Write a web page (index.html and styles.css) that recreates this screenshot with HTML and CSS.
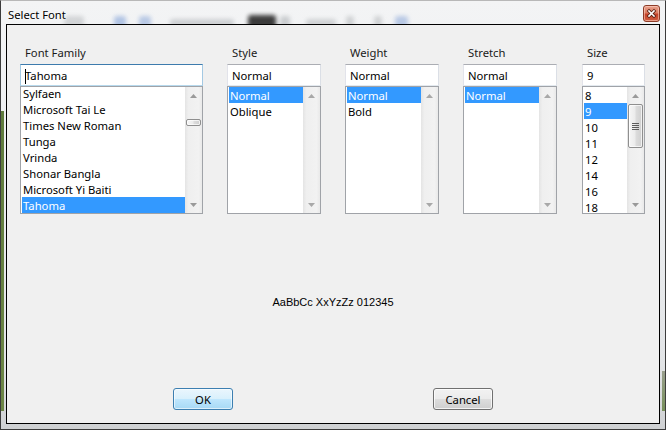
FILE: index.html
```html
<!DOCTYPE html>
<html>
<head>
<meta charset="utf-8">
<title>Select Font</title>
<link rel="stylesheet" href="styles.css">
</head>
<body>
<div class="window">
  <div class="titlebar">
    <div class="glass" aria-hidden="true">
      <span class="blob b1"></span>
      <span class="blob b2"></span>
      <span class="blob b3"></span>
      <span class="blob b4"></span>
      <span class="blob b5"></span>
      <span class="blob b6"></span>
      <span class="blob b7"></span>
      <span class="blob b8"></span>
      <span class="blob b9"></span>
      <span class="blob b10"></span>
    </div>
    <span class="title">Select Font</span>
    <div class="close" role="button" aria-label="Close">
      <svg width="15" height="15" viewBox="0 0 15 15">
        <path d="M5 5 L10 10 M10 5 L5 10" stroke="#5a2214" stroke-width="3.2" stroke-linecap="square" fill="none"/>
        <path d="M5 5 L10 10 M10 5 L5 10" stroke="#ffffff" stroke-width="1.6" stroke-linecap="square" fill="none"/>
      </svg>
    </div>
  </div>

  <div class="client">
    <div class="pickers">
      <div class="field">
        <div class="label">Font Family</div>
        <div class="input focus"><span class="caret"></span>Tahoma</div>
        <div class="list">
          <ul class="items shift">
            <li>Sylfaen</li>
            <li>Microsoft Tai Le</li>
            <li>Times New Roman</li>
            <li>Tunga</li>
            <li>Vrinda</li>
            <li>Shonar Bangla</li>
            <li>Microsoft Yi Baiti</li>
            <li class="sel">Tahoma</li>
          </ul>
          <div class="scrollbar">
            <div class="arrow"><svg width="7" height="4" viewBox="0 0 7 4"><polygon points="0,4 3.5,0 7,4" fill="#9a9a9a"/></svg></div>
            <div class="track"><div class="thumb small"></div></div>
            <div class="arrow"><svg width="7" height="4" viewBox="0 0 7 4"><polygon points="0,0 7,0 3.5,4" fill="#9a9a9a"/></svg></div>
          </div>
        </div>
      </div>

      <div class="field">
        <div class="label">Style</div>
        <div class="input">Normal</div>
        <div class="list">
          <ul class="items">
            <li class="sel">Normal</li>
            <li>Oblique</li>
          </ul>
          <div class="scrollbar">
            <div class="arrow"><svg width="7" height="4" viewBox="0 0 7 4"><polygon points="0,4 3.5,0 7,4" fill="#a8a8a8"/></svg></div>
            <div class="track"></div>
            <div class="arrow"><svg width="7" height="4" viewBox="0 0 7 4"><polygon points="0,0 7,0 3.5,4" fill="#a8a8a8"/></svg></div>
          </div>
        </div>
      </div>

      <div class="field">
        <div class="label">Weight</div>
        <div class="input">Normal</div>
        <div class="list">
          <ul class="items">
            <li class="sel">Normal</li>
            <li>Bold</li>
          </ul>
          <div class="scrollbar">
            <div class="arrow"><svg width="7" height="4" viewBox="0 0 7 4"><polygon points="0,4 3.5,0 7,4" fill="#a8a8a8"/></svg></div>
            <div class="track"></div>
            <div class="arrow"><svg width="7" height="4" viewBox="0 0 7 4"><polygon points="0,0 7,0 3.5,4" fill="#a8a8a8"/></svg></div>
          </div>
        </div>
      </div>

      <div class="field">
        <div class="label">Stretch</div>
        <div class="input">Normal</div>
        <div class="list">
          <ul class="items">
            <li class="sel">Normal</li>
          </ul>
          <div class="scrollbar">
            <div class="arrow"><svg width="7" height="4" viewBox="0 0 7 4"><polygon points="0,4 3.5,0 7,4" fill="#a8a8a8"/></svg></div>
            <div class="track"></div>
            <div class="arrow"><svg width="7" height="4" viewBox="0 0 7 4"><polygon points="0,0 7,0 3.5,4" fill="#a8a8a8"/></svg></div>
          </div>
        </div>
      </div>

      <div class="field size">
        <div class="label">Size</div>
        <div class="input">9</div>
        <div class="list">
          <ul class="items">
            <li>8</li>
            <li class="sel">9</li>
            <li>10</li>
            <li>11</li>
            <li>12</li>
            <li>14</li>
            <li>16</li>
            <li>18</li>
          </ul>
          <div class="scrollbar">
            <div class="arrow"><svg width="7" height="4" viewBox="0 0 7 4"><polygon points="0,4 3.5,0 7,4" fill="#9a9a9a"/></svg></div>
            <div class="track">
              <div class="thumb big">
                <svg width="7" height="7" viewBox="0 0 7 7"><path d="M0 0.5H7M0 2.5H7M0 4.5H7M0 6.5H7" stroke="#5c5c5c" stroke-width="1"/></svg>
              </div>
            </div>
            <div class="arrow"><svg width="7" height="4" viewBox="0 0 7 4"><polygon points="0,0 7,0 3.5,4" fill="#9a9a9a"/></svg></div>
          </div>
        </div>
      </div>
    </div>

    <div class="sample">AaBbCc XxYzZz 012345</div>

    <div class="buttons">
      <button class="btn default">OK</button>
      <button class="btn">Cancel</button>
    </div>
  </div>
</div>
</body>
</html>
```

FILE: styles.css
```css
* {
  box-sizing: border-box;
}

html,
body {
  margin: 0;
  padding: 0;
}

body {
  width: 666px;
  height: 430px;
  overflow: hidden;
  font-family: "Noto Sans", "Open Sans", sans-serif;
  font-size: 11.25px;
  color: #000;
  background: #ffffff;
}

.window {
  width: 666px;
  height: 430px;
  display: flex;
  flex-direction: column;
  padding: 0 5px 5px 5px;
  border: 1px solid #3c3c3c;
  border-top-color: #b8b8b8;
  background:
    linear-gradient(#5f7b3c, #6d8646) 0 110px / 3px 300px no-repeat,
    linear-gradient(to bottom, #9aa08e, #77905a) 100% 370px / 3px 40px no-repeat,
    linear-gradient(to bottom, #f3f4f5 0%, #eceef0 40%, #e2e4e6 85%, #cfd1d3 100%);
}

/* ---------- title bar ---------- */
.titlebar {
  position: relative;
  height: 23px;
  display: flex;
  align-items: flex-start;
}

.glass {
  position: absolute;
  left: -6px;
  right: -6px;
  top: 0;
  bottom: 0;
  overflow: hidden;
}

.blob {
  position: absolute;
  top: 15px;
  height: 12px;
  border-radius: 3px;
  filter: blur(2px);
  opacity: 0.55;
}

.b1 { left: 64px; width: 20px; background: #b9bcbf; }
.b2 { left: 114px; width: 12px; background: #7d9ed6; }
.b3 { left: 139px; width: 12px; background: #8aa6d8; }
.b4 { left: 170px; width: 64px; height: 8px; top: 18px; background: #b0b4b8; }
.b5 { left: 248px; width: 28px; height: 14px; top: 14px; background: #1d1d1d; opacity: 0.85; }
.b6 { left: 280px; width: 10px; background: #a9adb1; }
.b7 { left: 306px; width: 30px; height: 8px; top: 18px; background: #b4b7ba; }
.b8 { left: 346px; width: 8px; background: #b4b7ba; }
.b9 { left: 374px; width: 8px; background: #b4b7ba; }
.b10 { left: 395px; width: 13px; background: #8aa6d8; }

.title {
  position: relative;
  margin-top: 5px;
  padding-left: 2px;
  line-height: 17px;
  color: #000;
  text-shadow: 0 0 6px #ffffff, 0 0 3px #ffffff;
  flex: 1;
}

.close {
  position: relative;
  margin-top: 4px;
  width: 17px;
  height: 17px;
  border: 1px solid #8c3b27;
  border-radius: 3px;
  background: linear-gradient(to bottom, #e9a18c 0%, #dc7c62 45%, #c54229 55%, #cf5d40 100%);
  box-shadow: inset 0 0 0 1px rgba(255, 215, 200, 0.55);
  display: flex;
  align-items: center;
  justify-content: center;
}

.close svg {
  display: block;
}

/* ---------- client area ---------- */
.client {
  flex: 1;
  display: flex;
  flex-direction: column;
  border: 1px solid #000;
  background: #f0f0f0;
  padding: 19px 0 13px 0;
}

.pickers {
  display: grid;
  grid-template-columns: 183px 94px 94px 94px 64px;
  column-gap: 24px;
  padding-left: 13px;
}

.field {
  display: flex;
  flex-direction: column;
  min-width: 0;
}

.field.size {
  margin-left: 1px;
}

.label {
  height: 16px;
  line-height: 16px;
  padding: 1px 0 0 5px;
  margin-bottom: 4px;
  color: #1a1a1a;
  white-space: nowrap;
}

.input {
  height: 22px;
  line-height: 18px;
  padding: 2px 4px 0;
  border: 1px solid;
  border-color: #abadb3 #dbdfe6 #e3e9ef #e2e3ea;
  background: #fff;
  white-space: nowrap;
}

.input.focus {
  border-color: #3d7bad #a4c9e3 #b7d9ed #a4c9e3;
}

.caret {
  display: inline-block;
  width: 1px;
  height: 15px;
  margin-right: -1px;
  background: #000;
  vertical-align: -4px;
}

.list {
  height: 128px;
  display: flex;
  border: 1px solid #a0a3a8;
  background: #fff;
  overflow: hidden;
}

.items {
  flex: 1;
  min-width: 0;
  list-style: none;
  margin: 0 0 0 1px;
  padding: 0;
}

.items.shift {
  margin-top: -2px;
}

.items li {
  height: 16px;
  line-height: 14px;
  padding: 2px 0 0 1px;
  white-space: nowrap;
  overflow: hidden;
}

.items li.sel {
  background: #3399ff;
  color: #fff;
}

.scrollbar {
  width: 17px;
  flex: none;
  display: flex;
  flex-direction: column;
  background: linear-gradient(to right, #e4e4e4 0%, #efefef 20%, #f2f2f2 80%, #e9e9e9 100%);
}

.arrow {
  height: 17px;
  flex: none;
  display: flex;
  align-items: center;
  justify-content: center;
}

.arrow svg {
  display: block;
}

.track {
  flex: 1;
}

.thumb {
  margin: 0 1px;
  border: 1px solid #8f8f8f;
  border-radius: 2px;
  background: linear-gradient(to right, #f6f6f6 0%, #ececec 45%, #dcdcdc 55%, #cfcfcf 100%);
  box-shadow: inset 0 0 0 1px rgba(255, 255, 255, 0.7);
  display: flex;
  align-items: center;
  justify-content: center;
}

.thumb.small {
  margin-top: 15px;
  height: 7px;
}

.thumb.big {
  height: 44px;
}

.thumb svg {
  display: block;
}

/* ---------- sample ---------- */
.sample {
  flex: 1;
  display: flex;
  align-items: center;
  justify-content: center;
  padding-top: 1px;
  font-family: "Liberation Sans", "DejaVu Sans", sans-serif;
  font-size: 11px;
  color: #000;
}

/* ---------- buttons ---------- */
.buttons {
  display: flex;
  justify-content: space-between;
  padding: 0 166px;
}

.btn {
  width: 60px;
  height: 22px;
  padding: 1px 0 0;
  font-family: "Noto Sans", "Open Sans", sans-serif;
  font-size: 11.25px;
  line-height: 18px;
  color: #000;
  border: 1px solid #707070;
  border-radius: 3px;
  background: linear-gradient(to bottom, #f2f2f2 0%, #ebebeb 48%, #dddddd 52%, #cfcfcf 100%);
  box-shadow: inset 0 0 0 1px rgba(255, 255, 255, 0.75);
}

.btn.default {
  border-color: #3c7fb1;
  background: linear-gradient(to bottom, #eaf6fd 0%, #d9f0fc 48%, #bee6fd 52%, #a7d9f5 100%);
  box-shadow: inset 0 0 0 1px rgba(255, 255, 255, 0.6);
}
```
